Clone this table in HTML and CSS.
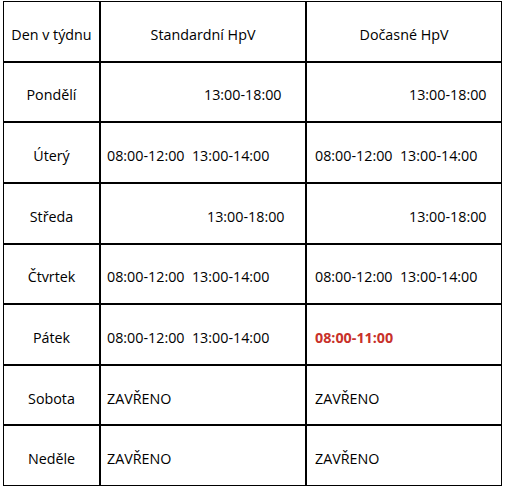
FILE: index.html
```html
<!DOCTYPE html>
<html lang="cs">
<head>
<meta charset="utf-8">
<link rel="stylesheet" href="styles.css">
</head>
<body>
<div class="table">
  <div class="cell head">Den v týdnu</div>
  <div class="cell head">Standardní HpV</div>
  <div class="cell head">Dočasné HpV</div>

  <div class="cell day">Pondělí</div>
  <div class="cell"><span class="ind-a">13:00-18:00</span></div>
  <div class="cell temp"><span class="ind-c">13:00-18:00</span></div>

  <div class="cell day">Úterý</div>
  <div class="cell">08:00-12:00  13:00-14:00</div>
  <div class="cell temp">08:00-12:00  13:00-14:00</div>

  <div class="cell day">Středa</div>
  <div class="cell"><span class="ind-b">13:00-18:00</span></div>
  <div class="cell temp"><span class="ind-c">13:00-18:00</span></div>

  <div class="cell day">Čtvrtek</div>
  <div class="cell">08:00-12:00  13:00-14:00</div>
  <div class="cell temp">08:00-12:00  13:00-14:00</div>

  <div class="cell day">Pátek</div>
  <div class="cell">08:00-12:00  13:00-14:00</div>
  <div class="cell temp"><span class="alert">08:00-11:00</span></div>

  <div class="cell day">Sobota</div>
  <div class="cell">ZAVŘENO</div>
  <div class="cell temp">ZAVŘENO</div>

  <div class="cell day">Neděle</div>
  <div class="cell">ZAVŘENO</div>
  <div class="cell temp">ZAVŘENO</div>
</div>
</body>
</html>
```

FILE: styles.css
```css
html, body {
  margin: 0;
  padding: 0;
  background: #fff;
}
body {
  padding: 1px 0 0 3px;
  font-family: "Open Sans", "Liberation Sans", sans-serif;
  font-size: 14.3px;
  color: #000;
}
.table {
  display: grid;
  grid-template-columns: 95px 204px 194px;
  grid-template-rows: repeat(8, 1fr);
  gap: 2px;
  width: 499px;
  height: 485px;
  box-sizing: border-box;
  border: 1px solid #000;
  background: #000;
}
.cell {
  background: #fff;
  display: flex;
  align-items: center;
  padding: 6px 0 0 6px;
  white-space: pre;
}
.cell.temp {
  padding-left: 8px;
}
.head, .day {
  justify-content: center;
  padding-left: 0;
}
.ind-a { margin-left: 97px; }
.ind-b { margin-left: 100px; }
.ind-c { margin-left: 94px; }
.alert {
  color: #c8312a;
  font-weight: bold;
}
```
